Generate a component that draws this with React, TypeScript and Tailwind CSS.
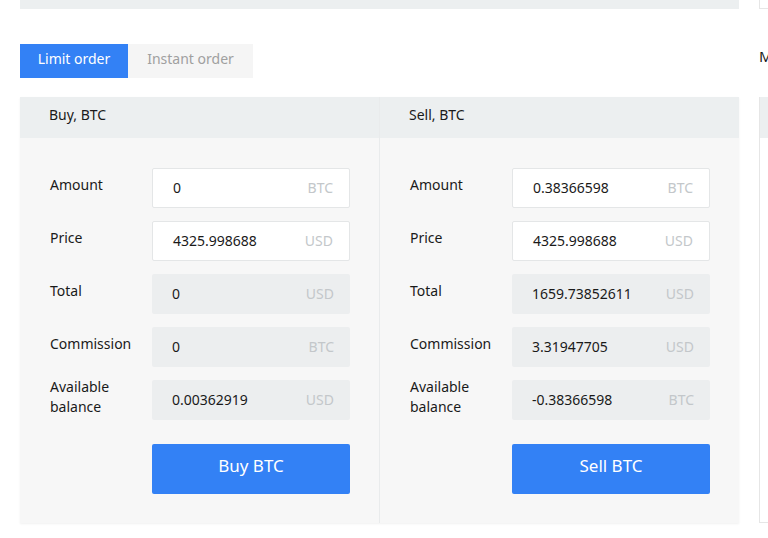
import React from "react";

type Row = {
  label: string;
  value: string;
  unit: string;
  editable?: boolean;
};

const buyRows: Row[] = [
  { label: "Amount", value: "0", unit: "BTC", editable: true },
  { label: "Price", value: "4325.998688", unit: "USD", editable: true },
  { label: "Total", value: "0", unit: "USD" },
  { label: "Commission", value: "0", unit: "BTC" },
  { label: "Available balance", value: "0.00362919", unit: "USD" },
];

const sellRows: Row[] = [
  { label: "Amount", value: "0.38366598", unit: "BTC", editable: true },
  { label: "Price", value: "4325.998688", unit: "USD", editable: true },
  { label: "Total", value: "1659.73852611", unit: "USD" },
  { label: "Commission", value: "3.31947705", unit: "USD" },
  { label: "Available balance", value: "-0.38366598", unit: "BTC" },
];

const Field = ({ row }: { row: Row }) => (
  <div className="flex items-center h-10">
    <div className="w-[102px] shrink-0 pr-2 leading-5 -mt-[6px] text-[#1a1a1a]">{row.label}</div>
    <div
      className={
        row.editable
          ? "flex-1 h-10 flex items-center justify-between pl-5 pr-4 pb-[2px] bg-white border border-[#e4e6e7] rounded-[2px]"
          : "flex-1 h-10 flex items-center justify-between pl-5 pr-4 pb-[2px] bg-[#eceeef] rounded-[2px]"
      }
    >
      <span className="text-[#1a1a1a]">{row.value}</span>
      <span className="text-[#c3c7ca]">{row.unit}</span>
    </div>
  </div>
);

const OrderColumn = ({
  title,
  rows,
  action,
  divider,
}: {
  title: string;
  rows: Row[];
  action: string;
  divider?: boolean;
}) => (
  <div className={divider ? "flex-1 flex flex-col border-l border-[#e9ebec]" : "flex-1 flex flex-col"}>
    <div className="h-[41px] flex items-center pl-[29px] pb-[7px] bg-[#eceff0] text-[#1a1a1a]">{title}</div>
    <div className="flex-1 bg-[#f7f7f7] pt-[30px] pb-[29px] pl-[30px] pr-[29px] flex flex-col gap-[13px]">
      {rows.map((r) => (
        <Field key={r.label} row={r} />
      ))}
      <div className="flex pt-[11px]">
        <div className="w-[102px] shrink-0" />
        <button className="flex-1 h-[50px] pb-[6px] bg-[#3381f5] text-white text-[17px] rounded-[2px]">
          {action}
        </button>
      </div>
    </div>
  </div>
);

export default function App() {
  return (
    <div
      className="w-[768px] h-[538px] overflow-hidden bg-white text-[14px]"
      style={{ fontFamily: '"Noto Sans", "DejaVu Sans", sans-serif' }}
    >
      <div className="flex gap-5 pl-5">
        <div className="w-[719px] shrink-0 flex flex-col">
          <div className="h-[9px] bg-[#eceff0]" />
          <div className="mt-[35px] flex h-[34px]">
            <button className="w-[108px] pb-[6px] bg-[#3381f5] text-white">Limit order</button>
            <button className="w-[125px] pb-[6px] bg-[#f5f5f5] text-[#a0a0a0]">Instant order</button>
          </div>
          <div className="mt-[19px] flex h-[426px] shadow-[0_1px_2px_rgba(0,0,0,0.06)]">
            <OrderColumn title="Buy, BTC" rows={buyRows} action="Buy BTC" />
            <OrderColumn title="Sell, BTC" rows={sellRows} action="Sell BTC" divider />
          </div>
        </div>
        <div className="flex-1 flex flex-col min-w-[200px]">
          <div className="h-[9px] border-l border-b border-[#e6e6e6] bg-white" />
          <div className="mt-[38px] h-[18px] leading-[18px] text-[#1a1a1a] text-[15px]">Market</div>
          <div className="mt-[32px] h-[426px] flex flex-col border-l border-b border-[#e6e6e6]">
            <div className="h-[41px] bg-[#eceff0]" />
            <div className="flex-1 bg-white" />
          </div>
        </div>
      </div>
    </div>
  );
}
